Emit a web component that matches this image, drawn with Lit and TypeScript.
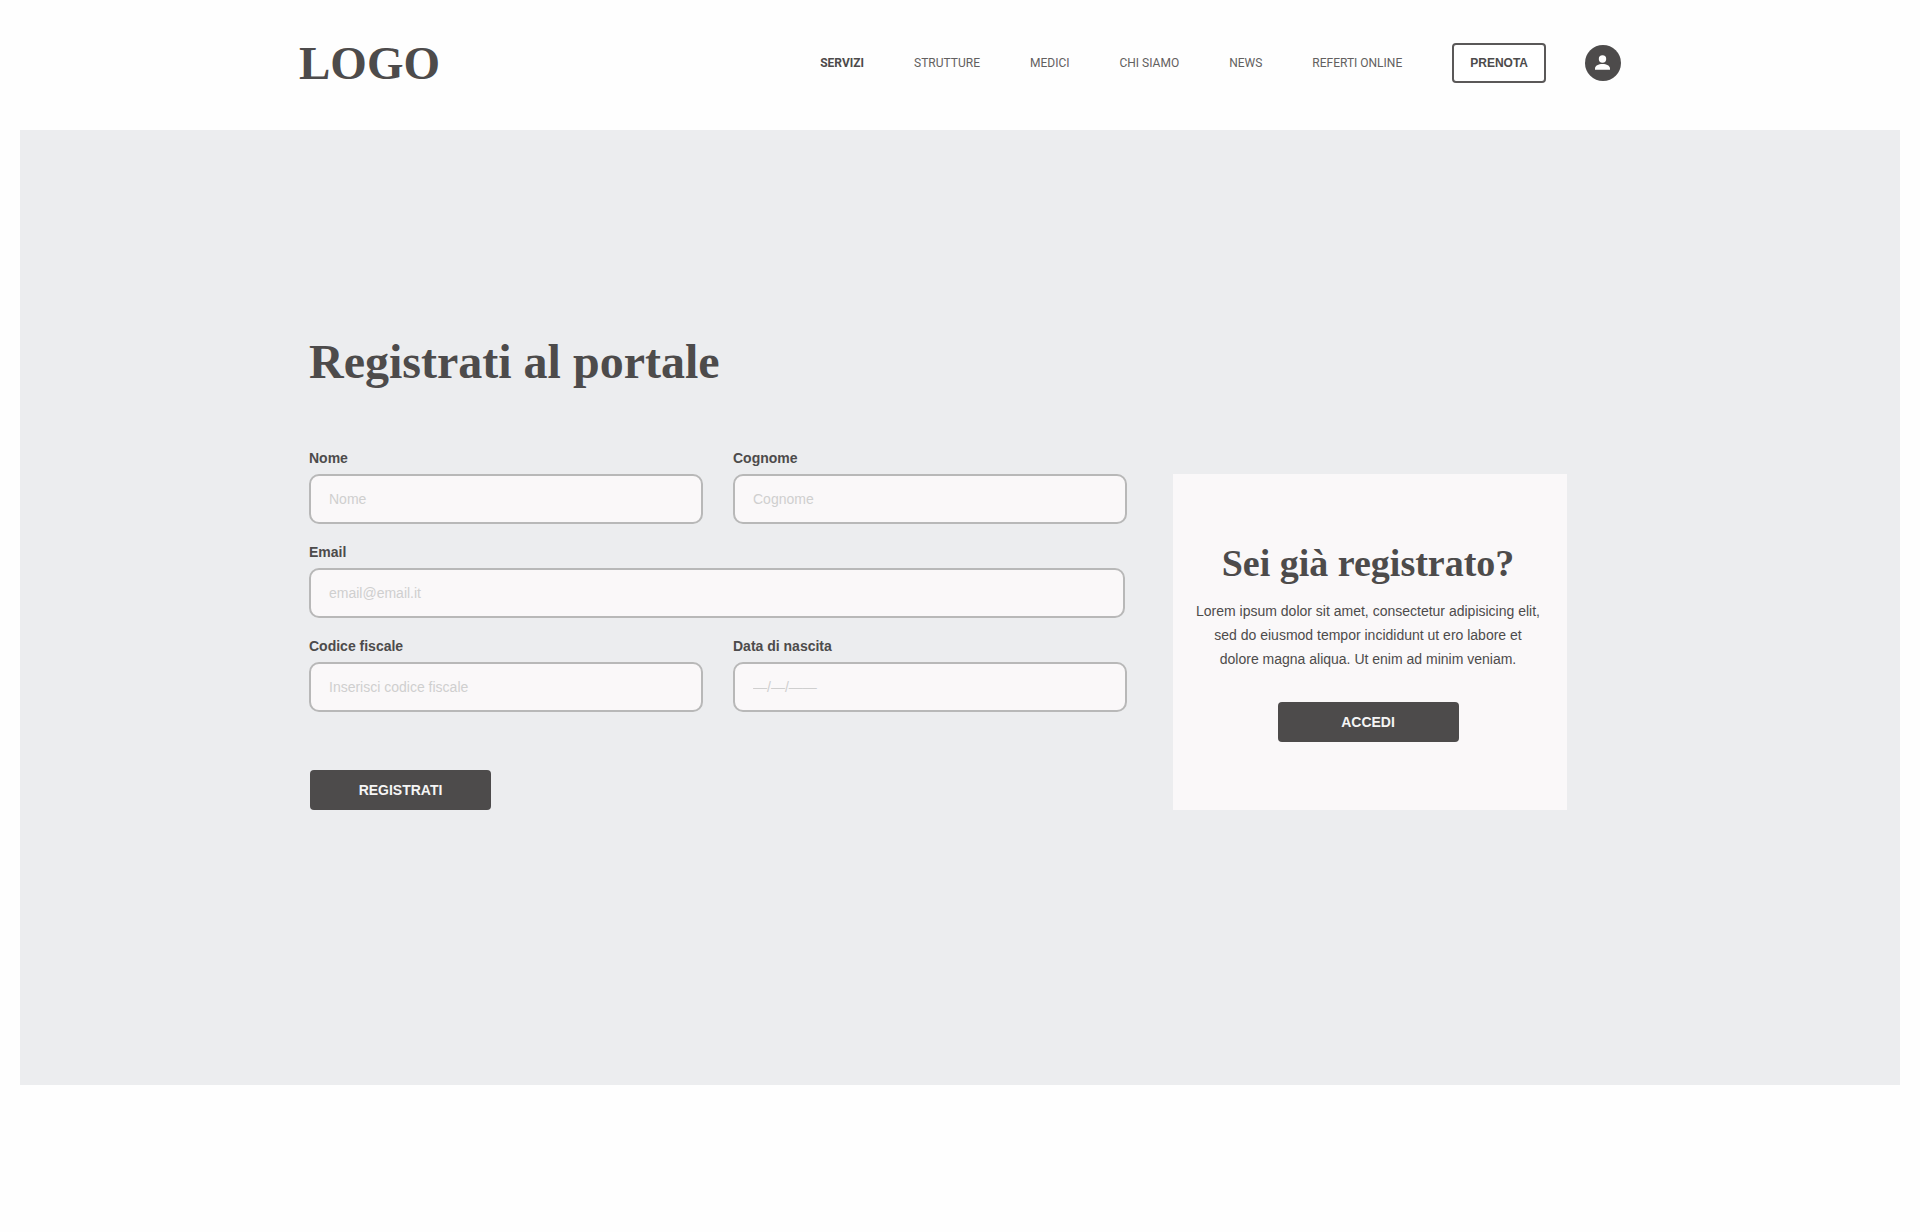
import { LitElement, html, css } from "lit";
import { customElement, property } from "lit/decorators.js";

interface NavItem {
  label: string;
  href: string;
  active?: boolean;
}

interface Field {
  id: string;
  label: string;
  placeholder: string;
  type: string;
  wide?: boolean;
}

const NAV: NavItem[] = [
  { label: "SERVIZI", href: "#servizi", active: true },
  { label: "STRUTTURE", href: "#strutture" },
  { label: "MEDICI", href: "#medici" },
  { label: "CHI SIAMO", href: "#chi-siamo" },
  { label: "NEWS", href: "#news" },
  { label: "REFERTI ONLINE", href: "#referti" },
];

const FIELDS: Field[] = [
  { id: "nome", label: "Nome", placeholder: "Nome", type: "text" },
  { id: "cognome", label: "Cognome", placeholder: "Cognome", type: "text" },
  { id: "email", label: "Email", placeholder: "email@email.it", type: "email", wide: true },
  { id: "cf", label: "Codice fiscale", placeholder: "Inserisci codice fiscale", type: "text" },
  { id: "nascita", label: "Data di nascita", placeholder: "—/—/——", type: "text" },
];

@customElement("site-header")
export class SiteHeader extends LitElement {
  @property({ attribute: false }) items: NavItem[] = [];

  static styles = css`
    :host {
      display: block;
    }
    .bar {
      display: flex;
      flex-wrap: wrap;
      align-items: center;
      justify-content: space-between;
      gap: 16px;
      box-sizing: border-box;
      max-width: 1322px;
      margin: 0 auto;
      padding: 35px 0 39px;
    }
    .logo {
      font: bold 47px/56px "Liberation Serif", serif;
      color: inherit;
      text-decoration: none;
    }
    .actions,
    .nav {
      display: flex;
      flex-wrap: wrap;
      align-items: center;
    }
    .nav {
      gap: 50px;
      margin-right: 50px;
    }
    .link {
      font: 12px/16px Roboto, sans-serif;
      color: #626060;
      text-decoration: none;
    }
    .link.active {
      font-weight: 700;
      color: #4d4b4b;
    }
    .book {
      height: 40px;
      padding: 0 16px;
      border: 2px solid #5a5858;
      border-radius: 4px;
      background: #fff;
      color: #4d4b4b;
      font: bold 12px/16px "Liberation Sans", sans-serif;
    }
    .account {
      display: grid;
      place-items: center;
      width: 36px;
      height: 36px;
      margin-left: 39px;
      padding: 0;
      border: 0;
      border-radius: 50%;
      background: #4d4b4b;
      color: #fff;
    }
  `;

  render() {
    return html`
      <header class="bar">
        <a class="logo" href="#">LOGO</a>
        <div class="actions">
          <nav class="nav">
            ${this.items.map(
              (item) => html`<a class="link ${item.active ? "active" : ""}" href=${item.href}>${item.label}</a>`
            )}
          </nav>
          <button class="book" type="button">PRENOTA</button>
          <button class="account" type="button" aria-label="Area personale">
            <svg width="36" height="36" viewBox="0 0 36 36" fill="currentColor" aria-hidden="true">
              <circle cx="17.5" cy="14" r="3.7" />
              <path d="M10 24.8v-1.2c0-2.900 3.400-4.600 7.500-4.600s7.500 1.700 7.500 4.600v1.200z" />
            </svg>
          </button>
        </div>
      </header>
    `;
  }
}

@customElement("registration-form")
export class RegistrationForm extends LitElement {
  @property({ attribute: false }) fields: Field[] = [];

  static styles = css`
    :host {
      display: block;
    }
    .grid {
      display: grid;
      grid-template-columns: repeat(2, minmax(0, 1fr));
      gap: 20px 30px;
    }
    .field {
      display: flex;
      flex-direction: column;
      gap: 8px;
      color: #4d4b4b;
    }
    .wide {
      grid-column: 1 / -1;
      padding-right: 2px;
    }
    .label {
      font: bold 14px/16px "Liberation Sans", sans-serif;
    }
    .input {
      box-sizing: border-box;
      width: 100%;
      height: 50px;
      padding: 0 18px;
      border: 2px solid #b8b8b8;
      border-radius: 10px;
      background: #faf8f9;
      color: #4d4b4b;
      font: 14px/20px "Liberation Sans", sans-serif;
    }
    .input::placeholder {
      color: #cfcfcf;
      opacity: 1;
    }
    .submit {
      display: block;
      width: 181px;
      height: 40px;
      margin: 58px 0 0 1px;
      padding: 0;
      border: 0;
      border-radius: 4px;
      background: #4d4b4b;
      color: #f5f5f5;
      font: bold 14px/20px "Liberation Sans", sans-serif;
    }
  `;

  render() {
    return html`
      <form @submit=${(e: Event) => e.preventDefault()}>
        <div class="grid">
          ${this.fields.map(
            (f) => html`
              <div class="field ${f.wide ? "wide" : ""}">
                <label class="label" for=${f.id}>${f.label}</label>
                <input class="input" id=${f.id} name=${f.id} type=${f.type} placeholder=${f.placeholder} />
              </div>
            `
          )}
        </div>
        <button class="submit" type="submit">REGISTRATI</button>
      </form>
    `;
  }
}

@customElement("login-card")
export class LoginCard extends LitElement {
  static styles = css`
    :host {
      display: block;
    }
    .card {
      display: flex;
      flex-direction: column;
      align-items: center;
      padding: 69px 24px 68px 20px;
      background: #faf8f9;
      color: #4d4b4b;
      text-align: center;
    }
    .title {
      margin: 0 0 16px;
      font: bold 38px/40px "Liberation Serif", serif;
    }
    .text {
      margin: 0 0 31px;
      font: 14px/24px "Liberation Sans", sans-serif;
    }
    .login {
      width: 181px;
      height: 40px;
      padding: 0;
      border: 0;
      border-radius: 4px;
      background: #4d4b4b;
      color: #f5f5f5;
      font: bold 14px/20px "Liberation Sans", sans-serif;
    }
  `;

  render() {
    return html`
      <aside class="card">
        <h2 class="title">Sei già registrato?</h2>
        <p class="text">
          Lorem ipsum dolor sit amet, consectetur adipisicing elit, sed do eiusmod tempor incididunt ut ero labore et
          dolore magna aliqua. Ut enim ad minim veniam.
        </p>
        <button class="login" type="button">ACCEDI</button>
      </aside>
    `;
  }
}

@customElement("app-root")
export class AppRoot extends LitElement {
  static styles = css`
    :host {
      display: block;
      box-sizing: border-box;
      min-height: 100vh;
      padding: 0 20px;
      background: #fefefe;
      color: #4d4b4b;
    }
    .hero {
      padding: 208px 0 275px;
      background: #ecedef;
    }
    .content {
      box-sizing: border-box;
      max-width: 1320px;
      margin: 0 auto;
      padding: 0 53px 0 9px;
    }
    .title {
      margin: 0 0 64px;
      font: bold 48px/48px "Liberation Serif", serif;
    }
    .columns {
      display: grid;
      grid-template-columns: minmax(0, 818fr) minmax(0, 394fr);
      align-items: end;
      gap: 46px;
    }
    @media (max-width: 1100px) {
      .hero {
        padding: 64px 0;
      }
      .content {
        padding: 0 16px;
      }
      .columns {
        grid-template-columns: minmax(0, 1fr);
      }
    }
  `;

  render() {
    return html`
      <site-header .items=${NAV}></site-header>
      <main class="hero">
        <div class="content">
          <h1 class="title">Registrati al portale</h1>
          <div class="columns">
            <registration-form .fields=${FIELDS}></registration-form>
            <login-card></login-card>
          </div>
        </div>
      </main>
    `;
  }
}
